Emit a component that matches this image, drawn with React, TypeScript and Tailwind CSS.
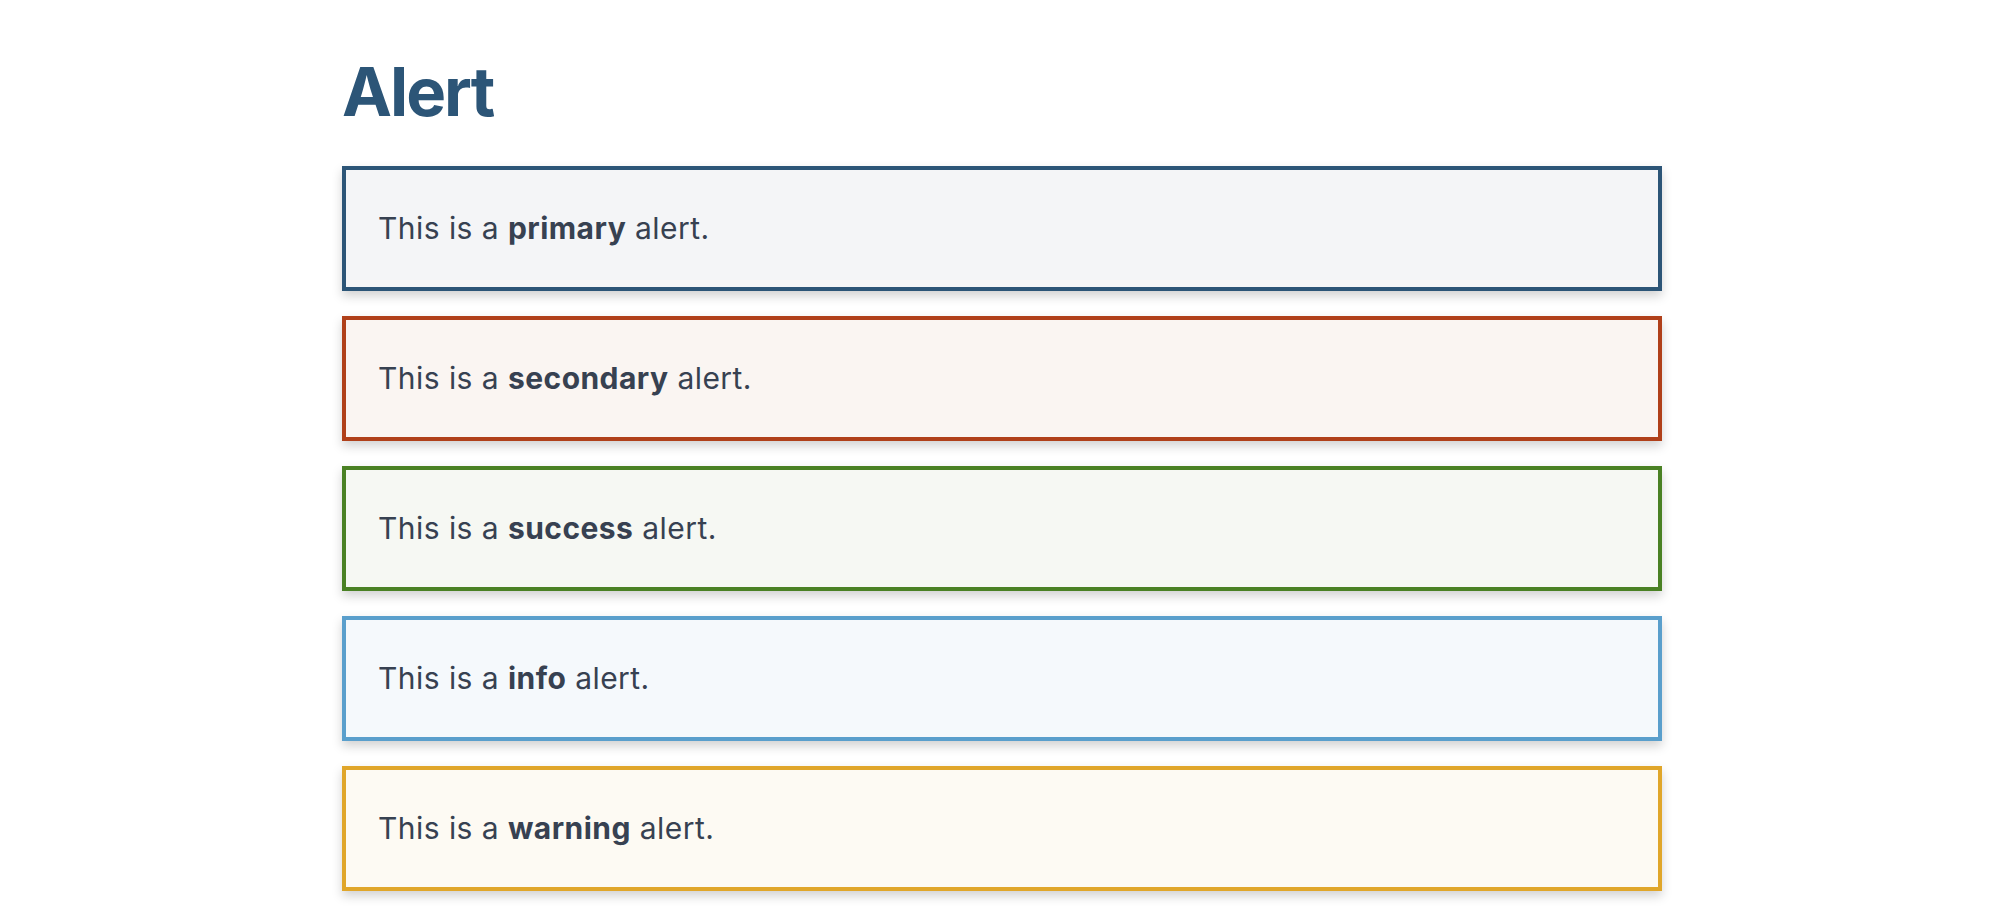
import React from "react";

const alerts = [
  { word: "primary", cls: "border-[#2c5577] bg-[#f4f5f7]" },
  { word: "secondary", cls: "border-[#b0401a] bg-[#faf5f2]" },
  { word: "success", cls: "border-[#4a8124] bg-[#f6f8f3]" },
  { word: "info", cls: "border-[#5a9fcc] bg-[#f5f9fc]" },
  { word: "warning", cls: "border-[#e0a62a] bg-[#fdfaf3]" },
];

export default function App() {
  return (
    <div className="min-h-screen bg-white font-['Inter',sans-serif]">
      <div className="ml-[342px] w-[1320px] pt-[58px]">
        <h1 className="text-[67px] leading-[67px] font-bold text-[#2c5577] tracking-[-2px]">Alert</h1>
        <div className="mt-[41px] flex flex-col gap-[25px]">
          {alerts.map((a) => (
            <div
              key={a.word}
              className={`border-4 ${a.cls} px-[32px] py-[36px] shadow-[0_5px_10px_rgba(0,0,0,0.18)]`}
            >
              <p className="text-[30px] leading-[45px] tracking-[0.45px] text-[#374151]">
                This is a <strong className="font-bold">{a.word}</strong> alert.
              </p>
            </div>
          ))}
        </div>
      </div>
    </div>
  );
}
